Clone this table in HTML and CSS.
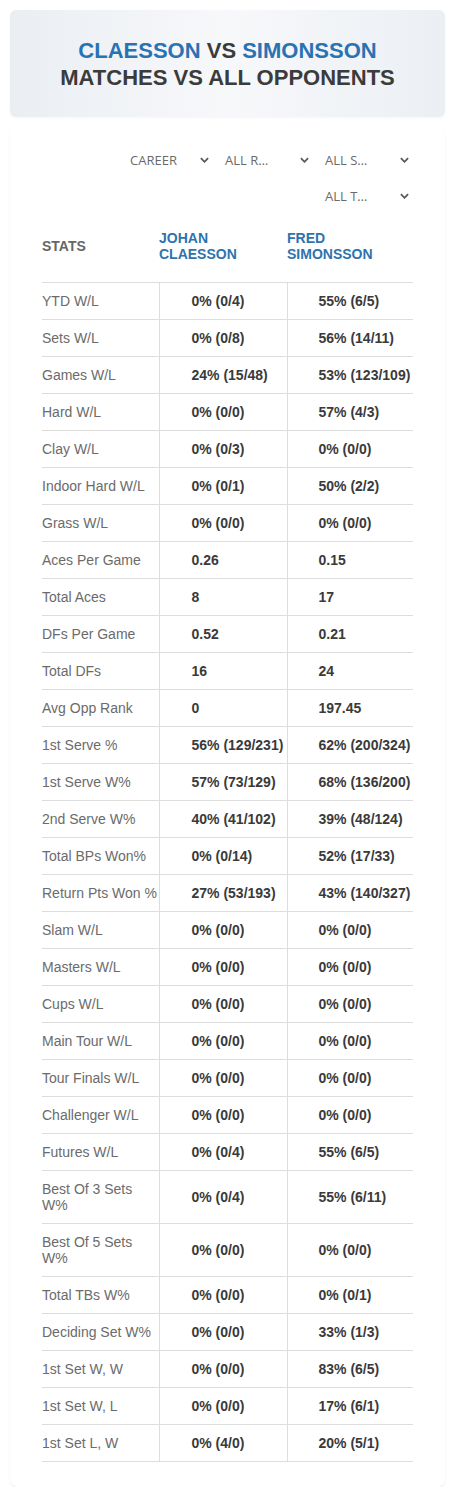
FILE: index.html
```html
<!DOCTYPE html>
<html lang="en">
  <head>
    <meta charset="UTF-8" />
    <meta name="viewport" content="width=device-width, initial-scale=1.0" />
    <title>Claesson vs Simonsson</title>
    <link rel="stylesheet" href="styles.css">
  </head>
  <body>
    <div class="banner">
      <h1>
        <span class="player">CLAESSON</span> VS
        <span class="player">SIMONSSON</span><br />
        MATCHES VS ALL OPPONENTS
      </h1>
    </div>
    <div class="card">
      <div class="filters">
        <div class="filter"><span>CAREER</span><svg viewBox="0 0 10 6"><path d="M1 1l4 4 4-4" /></svg></div>
        <div class="filter"><span>ALL R…</span><svg viewBox="0 0 10 6"><path d="M1 1l4 4 4-4" /></svg></div>
        <div class="filter"><span>ALL S…</span><svg viewBox="0 0 10 6"><path d="M1 1l4 4 4-4" /></svg></div>
        <div class="filter"><span>ALL T…</span><svg viewBox="0 0 10 6"><path d="M1 1l4 4 4-4" /></svg></div>
      </div>
      <table class="stats">
        <colgroup>
          <col class="c-label" />
          <col class="c-one" />
          <col class="c-two" />
        </colgroup>
        <thead>
          <tr>
            <th class="head-stats">STATS</th>
            <th class="head-player">JOHAN<br />CLAESSON</th>
            <th class="head-player">FRED<br />SIMONSSON</th>
          </tr>
        </thead>
        <tbody>
          <tr><td>YTD W/L</td><td>0% (0/4)</td><td>55% (6/5)</td></tr>
          <tr><td>Sets W/L</td><td>0% (0/8)</td><td>56% (14/11)</td></tr>
          <tr><td>Games W/L</td><td>24% (15/48)</td><td>53% (123/109)</td></tr>
          <tr><td>Hard W/L</td><td>0% (0/0)</td><td>57% (4/3)</td></tr>
          <tr><td>Clay W/L</td><td>0% (0/3)</td><td>0% (0/0)</td></tr>
          <tr><td>Indoor Hard W/L</td><td>0% (0/1)</td><td>50% (2/2)</td></tr>
          <tr><td>Grass W/L</td><td>0% (0/0)</td><td>0% (0/0)</td></tr>
          <tr><td>Aces Per Game</td><td>0.26</td><td>0.15</td></tr>
          <tr><td>Total Aces</td><td>8</td><td>17</td></tr>
          <tr><td>DFs Per Game</td><td>0.52</td><td>0.21</td></tr>
          <tr><td>Total DFs</td><td>16</td><td>24</td></tr>
          <tr><td>Avg Opp Rank</td><td>0</td><td>197.45</td></tr>
          <tr><td>1st Serve %</td><td>56% (129/231)</td><td>62% (200/324)</td></tr>
          <tr><td>1st Serve W%</td><td>57% (73/129)</td><td>68% (136/200)</td></tr>
          <tr><td>2nd Serve W%</td><td>40% (41/102)</td><td>39% (48/124)</td></tr>
          <tr><td>Total BPs Won%</td><td>0% (0/14)</td><td>52% (17/33)</td></tr>
          <tr><td>Return Pts Won %</td><td>27% (53/193)</td><td>43% (140/327)</td></tr>
          <tr><td>Slam W/L</td><td>0% (0/0)</td><td>0% (0/0)</td></tr>
          <tr><td>Masters W/L</td><td>0% (0/0)</td><td>0% (0/0)</td></tr>
          <tr><td>Cups W/L</td><td>0% (0/0)</td><td>0% (0/0)</td></tr>
          <tr><td>Main Tour W/L</td><td>0% (0/0)</td><td>0% (0/0)</td></tr>
          <tr><td>Tour Finals W/L</td><td>0% (0/0)</td><td>0% (0/0)</td></tr>
          <tr><td>Challenger W/L</td><td>0% (0/0)</td><td>0% (0/0)</td></tr>
          <tr><td>Futures W/L</td><td>0% (0/4)</td><td>55% (6/5)</td></tr>
          <tr><td>Best Of 3 Sets W%</td><td>0% (0/4)</td><td>55% (6/11)</td></tr>
          <tr><td>Best Of 5 Sets W%</td><td>0% (0/0)</td><td>0% (0/0)</td></tr>
          <tr><td>Total TBs W%</td><td>0% (0/0)</td><td>0% (0/1)</td></tr>
          <tr><td>Deciding Set W%</td><td>0% (0/0)</td><td>33% (1/3)</td></tr>
          <tr><td>1st Set W, W</td><td>0% (0/0)</td><td>83% (6/5)</td></tr>
          <tr><td>1st Set W, L</td><td>0% (0/0)</td><td>17% (6/1)</td></tr>
          <tr><td>1st Set L, W</td><td>0% (4/0)</td><td>20% (5/1)</td></tr>
        </tbody>
      </table>
    </div>
  </body>
</html>
```

FILE: styles.css
```css
body {
  margin: 0;
  padding: 10px 10px 0;
  background-color: #ffffff;
  font-family: "Liberation Sans", Arial, sans-serif;
  color: #333333;
}
.banner {
  height: 107px;
  display: flex;
  align-items: center;
  justify-content: center;
  border-radius: 6px;
  background: linear-gradient(90deg, #eaeef3 0%, #f7f8fa 50%, #ebeff4 100%);
  box-shadow: 0 1px 3px rgba(0, 0, 0, 0.04);
}
.banner h1 {
  margin: 0;
  font-size: 22px;
  line-height: 27px;
  font-weight: bold;
  text-align: center;
  color: #3b3b3b;
}
.player {
  color: #2a73b3;
}
.card {
  margin-top: 10px;
  padding: 19px 32px 25px;
  border-radius: 8px;
  background-color: #ffffff;
  box-shadow: 0 1px 2px rgba(0, 0, 0, 0.08);
}
.filters {
  display: flex;
  flex-wrap: wrap;
  justify-content: flex-end;
  column-gap: 5px;
  row-gap: 8px;
}
.filter {
  width: 95px;
  height: 28px;
  box-sizing: border-box;
  padding: 0 4px 0 7px;
  display: flex;
  align-items: center;
  justify-content: space-between;
  font-family: "Open Sans", sans-serif;
  font-size: 13px;
  color: #6a6a6a;
}
.filter:first-child {
  width: 90px;
  padding-left: 7px;
}
.filter svg {
  width: 9px;
  height: 6px;
  fill: none;
  stroke: #5a5a5a;
  stroke-width: 2;
}
.stats {
  width: 100%;
  margin-top: 12px;
  table-layout: fixed;
  border-collapse: collapse;
  font-size: 14px;
  line-height: 16px;
}
.c-label {
  width: 117px;
}
.c-one {
  width: 128px;
}
.stats th {
  height: 48px;
  padding: 0 0 12px;
  text-align: left;
  font-weight: bold;
  vertical-align: middle;
  border-bottom: 1px solid #dddddd;
}
.head-stats {
  color: #666666;
}
.head-player {
  color: #2e73ad;
}
.stats td {
  padding: 10px 0;
  border-bottom: 1px solid #dddddd;
  font-weight: bold;
  color: #3a3a3a;
  vertical-align: middle;
}
.stats td:first-child {
  font-weight: normal;
  color: #6b6b6b;
  border-right: 1px solid #dddddd;
}
.stats td:nth-child(2) {
  padding-left: 32px;
  border-right: 1px solid #dddddd;
}
.stats td:nth-child(3) {
  padding-left: 31px;
  white-space: nowrap;
}
```
